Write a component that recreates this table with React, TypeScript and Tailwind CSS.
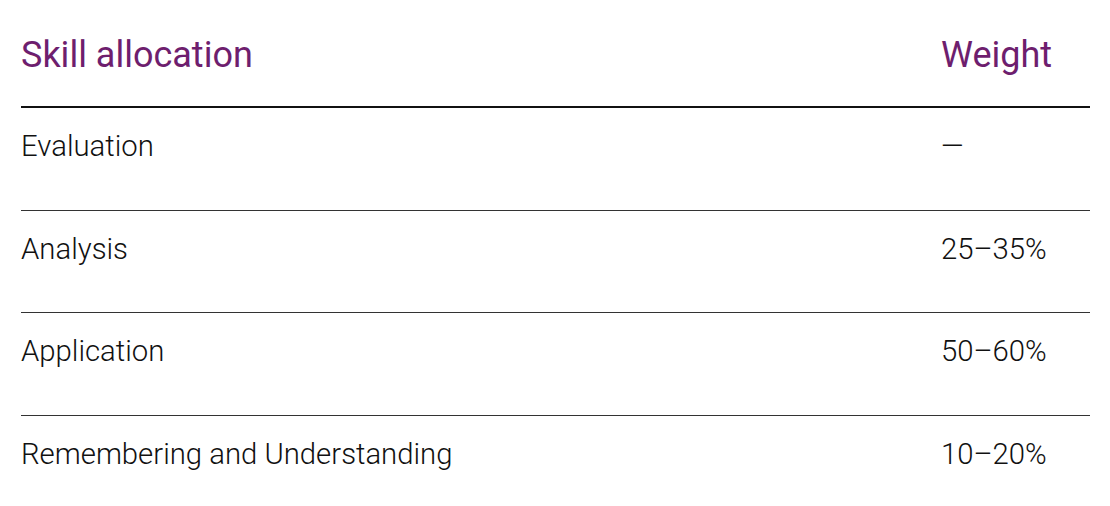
import React from "react";

const rows: [string, string][] = [
  ["Evaluation", "—"],
  ["Analysis", "25–35%"],
  ["Application", "50–60%"],
  ["Remembering and Understanding", "10–20%"],
];

export default function App() {
  return (
    <div className="w-[1110px] h-[506px] bg-white overflow-hidden" style={{ fontFamily: "Roboto, 'Noto Sans', sans-serif" }}>
      <div className="ml-[21px] w-[1069px]">
        <div className="grid grid-cols-[920px_149px] h-[108px]">
          <div className="border-b-2 border-[#111] pt-[37px] text-[36px] leading-[36px] font-normal text-[#6e1e6e]">Skill allocation</div>
          <div className="border-b-2 border-[#111] pt-[37px] text-[36px] leading-[36px] font-normal text-[#6e1e6e]">Weight</div>
        </div>
        {rows.map(([a, b]) => (
          <div key={a} className="grid grid-cols-[920px_149px] h-[102.5px]">
            <div className="border-b border-[#333] pt-[24px] text-[29.3px] leading-[29.3px] font-light text-[#111]">{a}</div>
            <div className="border-b border-[#333] pt-[24px] text-[29.3px] leading-[29.3px] font-light text-[#111]">{b}</div>
          </div>
        ))}
      </div>
    </div>
  );
}
